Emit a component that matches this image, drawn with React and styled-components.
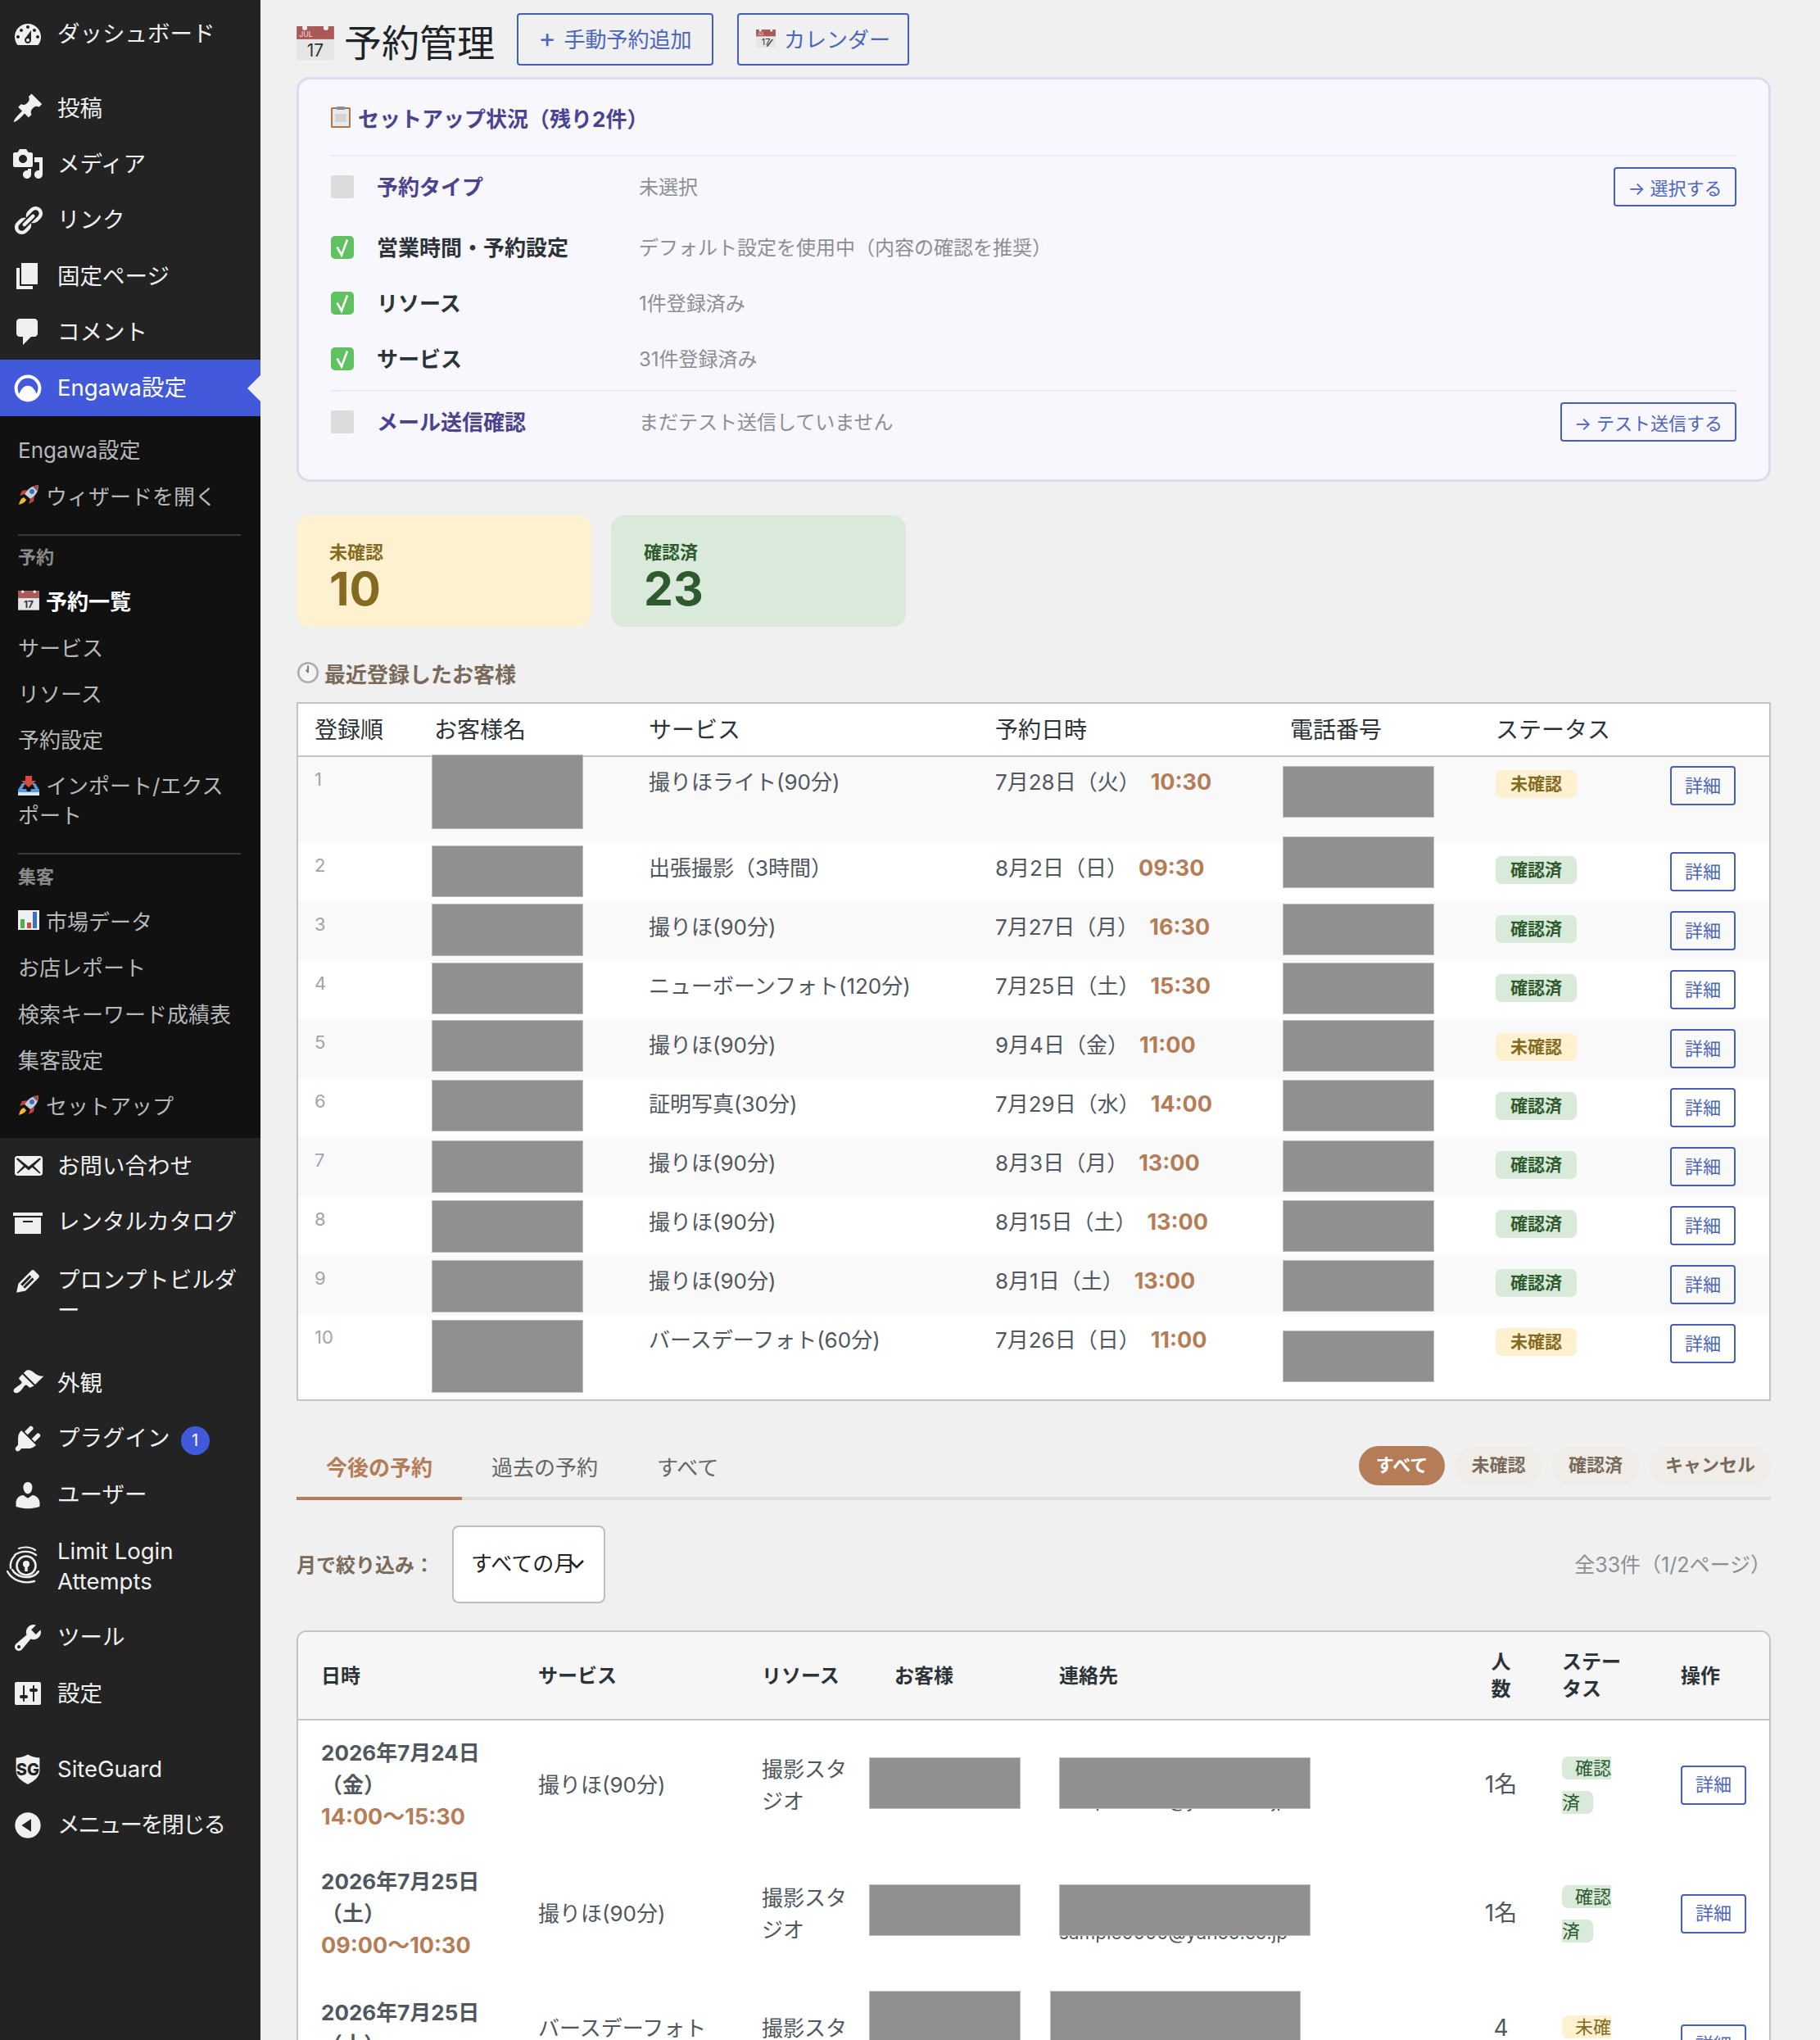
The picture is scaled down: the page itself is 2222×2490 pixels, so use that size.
import React from 'react'
import styled, { createGlobalStyle } from 'styled-components'

const GlobalStyle = createGlobalStyle`
  html, body {
    margin: 0;
    height: 2490px;
    overflow: hidden;
    background: #f0f0f1;
    font-family: Inter, "Noto Sans CJK JP", sans-serif;
  }
  * { box-sizing: border-box; }
`

const Page = styled.div`
  display: flex;
  width: 2222px;
  height: 2490px;
  overflow: hidden;
`

/* ---------- sidebar ---------- */

const Sidebar = styled.nav`
  flex: 0 0 318px;
  background: #232323;
  color: #f0f0f1;
`

const MenuItem = styled.div`
  display: flex;
  align-items: ${p => (p.$top !== undefined ? 'flex-start' : 'center')};
  position: relative;
  height: ${p => p.$h || 68.3}px;
  margin-top: ${p => p.$gap || 0}px;
  padding-left: 14px;
  padding-top: ${p => p.$top || 0}px;
  font-size: 27.5px;
  line-height: 37px;
  background: ${p => (p.$active ? '#4259dc' : 'transparent')};
  color: ${p => (p.$active ? '#fff' : '#f0f0f1')};

  svg {
    flex: 0 0 40px;
    width: 40px;
    height: 40px;
    fill: currentColor;
  }
`

const MenuLabel = styled.span`
  margin-left: 16px;
  white-space: nowrap;
  letter-spacing: ${p => p.$ls || 0}px;
`

const ActiveArrow = styled.i`
  position: absolute;
  right: 0;
  top: 50%;
  margin-top: -16px;
  border: 16px solid transparent;
  border-right-color: #f0f0f1;
  border-left-width: 0;
`

const CountBadge = styled.span`
  display: inline-block;
  width: 35px;
  height: 35px;
  margin-left: 13px;
  border-radius: 18px;
  background: #4259dc;
  color: #fff;
  font-size: 20px;
  line-height: 35px;
  letter-spacing: 0;
  text-align: center;
  vertical-align: 0;
`

const SubMenu = styled.div`
  background: #111;
  height: 881.5px;
  padding: 12px 24px 0 22px;
`

const SubItem = styled.div`
  display: flex;
  align-items: center;
  gap: 8px;
  height: 56.4px;
  font-size: 26px;
  color: ${p => (p.$current ? '#fff' : '#b6b8ba')};
  font-weight: ${p => (p.$current ? 700 : 400)};
  white-space: nowrap;

  svg { flex: 0 0 26px; }
`

const SubItemWrap = styled.div`
  font-size: 26px;
  line-height: 36px;
  color: #b6b8ba;
  padding: 12px 0 8px;

  svg { vertical-align: -3px; margin-right: 8px; }
`

const SubDivider = styled.div`
  height: 2px;
  background: #383838;
  margin: 19px 0 ${p => p.$mb}px;
`

const SubSection = styled.div`
  font-size: 22px;
  font-weight: 700;
  line-height: 24px;
  color: #8a8a8a;
  margin-bottom: 13px;
`

const LimitLoginSvg = styled.svg`
  && {
    height: 50px;
    margin-left: -6px;
    margin-right: 6px;
  }
`

const ShieldText = styled.text`
  font-size: 10px;
  font-weight: 800;
  fill: #232323;
`

/* ---------- main column ---------- */

const Main = styled.main`
  flex: 1;
  padding: 16px 60px 0 44px;
  min-width: 0;
`

const TitleRow = styled.header`
  display: flex;
  align-items: flex-start;
  height: 64px;
`

const PageTitle = styled.h1`
  display: flex;
  align-items: center;
  gap: 12px;
  margin: 13px 27px 0 0;
  font-size: 46px;
  font-weight: 400;
  line-height: 46px;
  color: #1d2327;
`

const OutlineButton = styled.button`
  display: inline-flex;
  align-items: center;
  justify-content: center;
  gap: ${p => p.$gap || 0}px;
  height: ${p => p.$h || 48}px;
  width: ${p => (p.$w ? `${p.$w}px` : 'auto')};
  padding: 0 0 ${p => p.$pb || 0}px;
  margin-right: ${p => p.$mr || 0}px;
  background: transparent;
  border: 2px solid #4560bb;
  border-radius: 4px;
  color: #4c65bd;
  font: inherit;
  font-size: ${p => p.$size || 22}px;
  white-space: nowrap;
`

const PlusMark = styled.span`
  font-size: 32px;
  line-height: 32px;
  margin-right: 10px;
`

const SetupCard = styled.section`
  margin-top: 14px;
  height: 494px;
  padding: 0 39px;
  background: #f8f7fd;
  border: 3px solid #dbdaf0;
  border-radius: 16px;
`

const SetupTitle = styled.h2`
  display: flex;
  align-items: center;
  gap: 9px;
  height: 94px;
  margin: 0;
  font-size: 26px;
  font-weight: 700;
  color: #4a4390;
  border-bottom: 2px solid #ebeaf6;
`

const SetupRow = styled.div`
  display: flex;
  align-items: center;
  height: ${p => p.$h}px;
  margin-bottom: ${p => p.$mb || 0}px;
  border-top: ${p => (p.$line ? '2px solid #ebeaf6' : '0')};
`

const CheckBox = styled.span`
  flex: 0 0 28px;
  height: 28px;
  border-radius: 2px;
  background: #dcdcdc;
`

const SetupLabel = styled.span`
  flex: 0 0 320px;
  margin-left: 28px;
  padding-bottom: 3px;
  font-size: 26px;
  font-weight: 700;
  color: ${p => (p.$todo ? '#4a4390' : '#2c3338')};
`

const SetupValue = styled.span`
  flex: 1;
  padding-bottom: 3px;
  font-size: 24px;
  color: #8c8f94;
`

const StatRow = styled.div`
  display: flex;
  gap: 24px;
  margin-top: 41px;
`

const StatCard = styled.div`
  width: 360px;
  height: 136px;
  padding: 30px 40px 0;
  border-radius: 16px;
  background: ${p => p.$bg};
  color: ${p => p.$fg};
`

const StatLabel = styled.div`
  font-size: 22px;
  font-weight: 700;
  line-height: 30px;
`

const StatValue = styled.div`
  font-size: 57px;
  font-weight: 700;
  line-height: 60px;
`

const SectionHeading = styled.h3`
  display: flex;
  align-items: center;
  gap: 6px;
  height: 40px;
  margin: 36px 0 16px;
  font-size: 26px;
  font-weight: 700;
  color: #7a6a5a;
`

const TableBox = styled.div`
  margin-top: ${p => p.$mt || 0}px;
  border: 2px solid #c3c4c7;
  background: #fff;
  border-radius: ${p => p.$r || '0'};
  overflow: ${p => (p.$clip ? 'hidden' : 'visible')};
`

const DataTable = styled.table`
  width: 1796px;
  table-layout: fixed;
  border-collapse: separate;
  border-spacing: 0;
`

const RecentHead = styled.th`
  height: 65px;
  padding: 0 0 3px 20px;
  border-bottom: 2px solid #c3c4c7;
  font-size: 28px;
  font-weight: 400;
  text-align: left;
  color: #2c3338;
`

const RecentRow = styled.tr`
  background: ${p => (p.$odd ? '#f9f9f9' : '#fff')};
`

const RecentCell = styled.td`
  position: relative;
  height: ${p => p.$h}px;
  padding: 11px 0 0 20px;
  vertical-align: top;
  font-size: 26px;
  line-height: 40px;
  color: #50575e;
  white-space: nowrap;
`

const RowNumber = styled.span`
  display: block;
  font-size: 22px;
  line-height: 32px;
  color: #a0a5aa;
`

const TimeText = styled.b`
  margin-left: 13px;
  font-size: 27px;
  color: #b57d57;
`

const StatusBadge = styled.span`
  display: inline-block;
  margin-top: 3px;
  padding: 0 18px;
  height: 34px;
  border-radius: 7px;
  font-size: 21px;
  font-weight: 700;
  line-height: 34px;
  background: ${p => (p.$pending ? '#fdf1d0' : '#d9eadb')};
  color: ${p => (p.$pending ? '#856a22' : '#2e5a2e')};
`

/* grey blocks that hide customer data in the source picture */
const Redact = styled.div`
  position: absolute;
  z-index: 1;
  left: ${p => p.$x}px;
  top: ${p => p.$y}px;
  width: ${p => p.$w}px;
  height: ${p => p.$h}px;
  background: #909090;
  border: 1px solid #bdbdbd;
`

const TabBar = styled.div`
  display: flex;
  align-items: flex-end;
  justify-content: space-between;
  height: 121px;
  border-bottom: 4px solid #dfdfdf;
`

const Tabs = styled.div`
  display: flex;
`

const Tab = styled.div`
  height: 71px;
  margin-bottom: -4px;
  padding: 0 36px;
  font-size: 26px;
  line-height: 64px;
  font-weight: ${p => (p.$active ? 700 : 400)};
  color: ${p => (p.$active ? '#b57d57' : '#666')};
  border-bottom: 4px solid ${p => (p.$active ? '#b57d57' : 'transparent')};
`

const Pills = styled.div`
  display: flex;
  gap: 13px;
  padding-bottom: 14px;
`

const Pill = styled.span`
  width: ${p => p.$w}px;
  height: 48px;
  border-radius: 24px;
  font-size: 22px;
  font-weight: 700;
  line-height: 46px;
  text-align: center;
  background: ${p => (p.$active ? '#b57d57' : '#f0ede8')};
  color: ${p => (p.$active ? '#fff' : '#7a6a5a')};
`

const FilterRow = styled.div`
  display: flex;
  align-items: center;
  height: 95px;
  margin-top: 31px;
`

const FilterLabel = styled.label`
  width: 190px;
  margin-bottom: 2px;
  font-size: 24px;
  font-weight: 700;
  color: #7a6a5a;
`

const MonthSelect = styled.div`
  position: relative;
  width: 187px;
  height: 95px;
  padding-left: 21px;
  background: #fff;
  border: 2px solid #c4bdb0;
  border-radius: 8px;
  font-size: 26px;
  line-height: 89px;
  color: #222;

  svg {
    position: absolute;
    left: 140px;
    top: 38px;
  }
`

const PageCount = styled.span`
  margin-left: auto;
  margin-bottom: 3px;
  font-size: 25px;
  color: #8c8f94;
`

const BookingHead = styled.th`
  height: 108px;
  padding: ${p => p.$pad || '0 0 0 28px'};
  background: #f6f6f7;
  border-bottom: 2px solid #c3c4c7;
  font-size: 24px;
  font-weight: 700;
  line-height: 33px;
  text-align: ${p => (p.$center ? 'center' : 'left')};
  color: #2c3338;
`

const BookingCell = styled.td`
  position: relative;
  height: ${p => p.$h}px;
  padding: 0 ${p => p.$right || 0}px 0 28px;
  vertical-align: middle;
  font-size: 26px;
  line-height: 39px;
  color: #50575e;
`

const ContactCell = styled(BookingCell)`
  vertical-align: top;
`

const CountCell = styled(BookingCell)`
  padding: 0 6px 0 0;
  font-size: 28px;
  text-align: center;
`

const DateText = styled.div`
  font-weight: 700;
`

const RangeText = styled.div`
  font-weight: 700;
  font-size: 27px;
  color: #b57d57;
`

const MailText = styled.div`
  font-size: 22.5px;
  line-height: 30px;
  padding-top: ${p => p.$top}px;
  white-space: nowrap;
`

const WrapBadge = styled.span`
  padding: 1px 16px;
  border-radius: 7px;
  font-size: 22px;
  line-height: 41px;
  box-decoration-break: slice;
  -webkit-box-decoration-break: slice;
  background: ${p => (p.$pending ? '#fdf1d0' : '#d9eadb')};
  color: ${p => (p.$pending ? '#856a22' : '#2e5a2e')};
`

/* ---------- icons ---------- */

const I = {
  dashboard: 'M3.76 16h12.48c1.1-1.37 1.76-3.11 1.76-5 0-4.42-3.58-8-8-8s-8 3.58-8 8c0 1.89.66 3.63 1.76 5zM10 4c.55 0 1 .45 1 1s-.45 1-1 1-1-.45-1-1 .45-1 1-1zM6 6c.55 0 1 .45 1 1s-.45 1-1 1-1-.45-1-1 .45-1 1-1zm8 0c.55 0 1 .45 1 1s-.45 1-1 1-1-.45-1-1 .45-1 1-1zm-5.37 5.55L12 7v6c0 1.1-.9 2-2 2s-2-.9-2-2c0-.57.24-1.08.63-1.45zM4 10c.55 0 1 .45 1 1s-.45 1-1 1-1-.45-1-1 .45-1 1-1zm12 0c.55 0 1 .45 1 1s-.45 1-1 1-1-.45-1-1 .45-1 1-1zm-5 3c0-.55-.45-1-1-1s-1 .45-1 1 .45 1 1 1 1-.45 1-1z',
  post: 'M10.44 3.02l1.82-1.82 6.36 6.35-1.83 1.82c-1.05-.68-2.48-.57-3.41.36l-.75.75c-.92.93-1.04 2.35-.35 3.41l-1.83 1.82-2.41-2.41-2.8 2.79c-.42.42-3.38 2.71-3.8 2.29s1.86-3.39 2.28-3.81l2.79-2.79L4.1 9.36l1.83-1.82c1.05.69 2.48.57 3.4-.36l.75-.75c.93-.92 1.05-2.35.36-3.41z',
  media: 'M13 11V4c0-.55-.45-1-1-1h-1.67L9 1H5L3.67 3H2c-.55 0-1 .45-1 1v7c0 .55.45 1 1 1h10c.55 0 1-.45 1-1zM7 4.5c1.38 0 2.5 1.12 2.5 2.5S8.38 9.5 7 9.5 4.5 8.38 4.5 7 5.62 4.5 7 4.5zM14 6h5v10.5c0 1.38-1.12 2.5-2.5 2.5S14 17.88 14 16.5s1.12-2.5 2.5-2.5c.17 0 .34.02.5.05V9h-3V6zm-4 8.05V13h2v3.5c0 1.38-1.12 2.5-2.5 2.5S7 17.88 7 16.5 8.12 14 9.5 14c.17 0 .34.02.5.05z',
  links: 'M17.74 2.76c1.68 1.69 1.68 4.41 0 6.1l-1.53 1.52c-1.12 1.12-2.7 1.47-4.14 1.09l2.62-2.61.76-.77.76-.76c.84-.84.84-2.2 0-3.04-.84-.85-2.2-.85-3.04 0l-.77.76-3.38 3.38c-.37-1.44-.02-3.02 1.1-4.14l1.52-1.53c1.69-1.68 4.42-1.68 6.1 0zM8.59 13.43l5.34-5.34c.42-.42.42-1.1 0-1.52-.44-.43-1.13-.39-1.53 0l-5.33 5.34c-.42.42-.42 1.1 0 1.52.44.43 1.13.39 1.52 0zm-.76 2.29l4.14-4.15c.38 1.44.03 3.02-1.09 4.14l-1.52 1.53c-1.69 1.68-4.41 1.68-6.1 0-1.68-1.68-1.68-4.42 0-6.1l1.53-1.52c1.12-1.12 2.7-1.47 4.14-1.1l-4.14 4.15c-.85.84-.85 2.2 0 3.05.84.84 2.2.84 3.04 0z',
  page: 'M6 15V2h10v13H6zm-1 1h8v2H3V5h2v11z',
  comment: 'M5 2h9c1.1 0 2 .9 2 2v7c0 1.1-.9 2-2 2h-2l-5 5v-5H5c-1.1 0-2-.9-2-2V4c0-1.1.9-2 2-2z',
  mail: 'M19 14.5v-9c0-.83-.67-1.5-1.5-1.5H3.49c-.83 0-1.5.67-1.5 1.5v9c0 .83.67 1.5 1.5 1.5H17.5c.83 0 1.5-.67 1.5-1.5zm-1.31-9.11c.33.33.15.67-.03.84L13.6 9.95l3.9 4.06c.12.14.2.36.06.51-.13.16-.43.15-.56.05l-4.37-3.73-2.14 1.95-2.13-1.95-4.37 3.73c-.13.1-.43.11-.56-.05-.14-.15-.06-.37.06-.51l3.9-4.06-4.06-3.72c-.18-.17-.36-.51-.03-.84s.67-.17.95.07l6.24 5.04 6.25-5.04c.28-.24.62-.4.95-.07z',
  archive: 'M19 4v2H1V4h18zM2 7h16v10H2V7zm11 3V9H7v1h6z',
  edit: 'M13.89 3.39l2.71 2.72c.46.46.42 1.24.03 1.64l-8.01 8.02-5.56 1.16 1.16-5.58s7.6-7.63 7.99-8.03c.39-.39 1.22-.39 1.68.07zm-2.73 2.79l-5.59 5.61 1.11 1.11 5.54-5.65zm-2.97 8.23l5.58-5.6-1.07-1.08-5.59 5.6z',
  appearance: 'M14.48 11.06L7.41 3.99l1.5-1.5c.5-.56 2.3-.47 3.51.32 1.21.8 1.43 1.28 2.91 2.1 1.18.64 2.45 1.26 4.45.85zm-.71.71L6.7 4.7 4.93 6.47c-.39.39-.39 1.02 0 1.41l1.06 1.06c.39.39.39 1.03 0 1.42-.6.6-1.43 1.11-2.21 1.69-.35.26-.7.53-1.01.84C1.43 13.23.91 15 1.71 15.8c.79.8 2.57.27 3.93-1.08.31-.31.58-.66.85-1.02.57-.78 1.08-1.61 1.69-2.21.39-.39 1.02-.39 1.41 0l1.06 1.06c.39.39 1.02.39 1.41 0z',
  plugin: 'M13.11 4.36L9.87 7.6 8 5.73l3.24-3.24c.35-.34 1.05-.2 1.56.32.52.51.66 1.21.31 1.55zm-8 1.77l.91-1.12 9.01 9.01-1.19.84c-.71.71-2.63 1.16-3.82 1.16H6.14L4.9 17.26c-.59.59-1.54.59-2.12 0-.59-.58-.59-1.53 0-2.12l1.24-1.24v-3.88c0-1.13.4-3.19 1.09-3.89zm7.26 3.97l3.24-3.24c.34-.35 1.04-.21 1.55.31.52.51.66 1.21.31 1.55l-3.24 3.25z',
  users: 'M10 9.25c-2.27 0-2.73-3.44-2.73-3.44C7 4.02 7.82 2 9.97 2c2.16 0 2.98 2.02 2.71 3.81 0 0-.41 3.44-2.68 3.44zm0 2.57L12.72 10c2.39 0 4.52 2.33 4.52 4.53v2.49s-3.65 1.13-7.24 1.13c-3.65 0-7.24-1.13-7.24-1.13v-2.49c0-2.25 1.94-4.48 4.47-4.48z',
  tools: 'M16.68 9.77c-1.34 1.34-3.3 1.67-4.95.99l-5.41 6.52c-.99.99-2.59.99-3.58 0s-.99-2.59 0-3.57l6.52-5.42c-.68-1.65-.35-3.61.99-4.95 1.28-1.28 3.12-1.62 4.72-1.06l-2.89 2.89 2.82 2.82 2.86-2.87c.53 1.58.18 3.39-1.08 4.65zM3.81 16.21c.4.39 1.04.39 1.43 0 .4-.4.4-1.04 0-1.43-.39-.4-1.03-.4-1.43 0-.39.39-.39 1.03 0 1.43z',
  settings: 'M18 16V4c0-.55-.45-1-1-1H3c-.55 0-1 .45-1 1v12c0 .55.45 1 1 1h14c.55 0 1-.45 1-1zM8 11h1c.55 0 1 .45 1 1s-.45 1-1 1H8v1.5c0 .28-.22.5-.5.5s-.5-.22-.5-.5V13H6c-.55 0-1-.45-1-1s.45-1 1-1h1V5.5c0-.28.22-.5.5-.5s.5.22.5.5V11zm5-2h-1c-.55 0-1-.45-1-1s.45-1 1-1h1V5.5c0-.28.22-.5.5-.5s.5.22.5.5V7h1c.55 0 1 .45 1 1s-.45 1-1 1h-1v5.5c0 .28-.22.5-.5.5s-.5-.22-.5-.5V9z',
  collapse: 'M10 2.16c4.33 0 7.84 3.51 7.84 7.84s-3.51 7.84-7.84 7.84S2.16 14.33 2.16 10 5.71 2.16 10 2.16zm2 11.72V6.12L6.18 9.97z',
}

const Dash = ({ d }) => (
  <svg viewBox="0 0 20 20"><path d={d} /></svg>
)

const EngawaIcon = () => (
  <svg viewBox="0 0 20 20">
    <circle cx="10" cy="10" r="7.2" fill="none" stroke="currentColor" strokeWidth="2" />
    <path d="M4.4 14.6C5.4 10.6 7.6 8.4 10 8.4s4.6 2.2 5.6 6.2C14.2 16.2 12.2 17 10 17s-4.2-.8-5.6-2.4z" />
  </svg>
)

const LimitLoginIcon = () => (
  <LimitLoginSvg viewBox="0 0 40 50">
    <g fill="none" stroke="currentColor" strokeLinecap="round">
      <path strokeWidth="2.2" d="M15 3c6-2 14-2 20 2" />
      <path strokeWidth="2.4" d="M10 11c7-5 18-6 26 0" />
      <path strokeWidth="2.4" d="M5 27c-1-7 1-11 5-15" />
      <circle strokeWidth="2.6" cx="24" cy="24" r="11.5" />
      <path strokeWidth="2.4" d="M1 31c6 11 20 16 33 12" />
      <path strokeWidth="2.4" d="M7 29c5 8 15 11 24 8 3-1 6-3 8-6" />
    </g>
    <circle cx="24" cy="22" r="4" />
    <rect x="22.2" y="23" width="3.6" height="8" />
  </LimitLoginSvg>
)

const SiteGuardIcon = () => (
  <svg viewBox="0 0 20 20">
    <path d="M10 .8c2.2 1.4 4.8 2 7.2 2v8c0 3.6-3.2 6.2-7.2 8.2-4-2-7.2-4.6-7.2-8.2v-8c2.4 0 5-.6 7.2-2z" />
    <ShieldText x="10" y="13.5" textAnchor="middle">SG</ShieldText>
  </svg>
)

const CalendarEmoji = ({ size = 26, month, strike }) => (
  <svg width={size} height={size * 0.95} viewBox="0 0 46 44">
    <rect y="2" width="46" height="42" fill="#e6e6e6" />
    <rect y="2" width="46" height="16" fill="#a85a58" />
    <circle cx="10" cy="4" r="3" fill="#f3f3f3" />
    <circle cx="36" cy="4" r="3" fill="#f3f3f3" />
    {month && <text x="3" y="15" fontSize="9" fill="#f4dede" fontFamily="Inter">JUL</text>}
    <text x="23" y="39" fontSize="21" fill="#333" textAnchor="middle" fontFamily="Inter">17</text>
    {strike && <path d="M24 42L38 24l2 2-12 16z" fill="#4a4a4a" />}
  </svg>
)

const RocketEmoji = () => (
  <svg width="26" height="26" viewBox="0 0 26 26">
    <path d="M8 12C12 5 18 2 25 1c0 7-3 13-10 17l-7-6z" fill="#c3cfdc" />
    <circle cx="17" cy="9" r="3" fill="#3f6fb5" />
    <path d="M25 1c-3 .3-5 1-7 2l5 5c1-2 2-4 2-7z" fill="#a34a4a" />
    <path d="M8 12l-6 2 3-6 6-1zM15 18l-2 6 6-3 1-6z" fill="#c8443c" />
    <path d="M7 16c-3 1-5 4-6 9 4-1 8-3 9-6z" fill="#f5b731" />
  </svg>
)

const InboxEmoji = () => (
  <svg width="26" height="26" viewBox="0 0 26 26">
    <path d="M9 1h8v6h5l-9 8-9-8h5z" fill="#d84a3f" />
    <path d="M5 10L0 18v7h26v-7l-5-8-4 0 4 7h-5l-1 3h-4l-1-3H5l4-7z" fill="#5b98d6" />
    <path d="M0 21h26v4H0z" fill="#d7e4f2" />
  </svg>
)

const ChartEmoji = () => (
  <svg width="26" height="26" viewBox="0 0 26 26">
    <rect y="1" width="26" height="24" fill="#eef1f4" />
    <rect x="3" y="12" width="5" height="11" fill="#4caf50" />
    <rect x="11" y="16" width="5" height="7" fill="#d84a3f" />
    <rect x="18" y="3" width="5" height="20" fill="#3f6fb5" />
  </svg>
)

const ClipboardEmoji = () => (
  <svg width="24" height="26" viewBox="0 0 24 26">
    <rect y="1" width="24" height="25" rx="1.5" fill="#a9794e" />
    <rect x="2" y="3" width="20" height="21" fill="#e9e9e9" />
    <rect x="7" y="0" width="10" height="4" rx="1" fill="#8d8d8d" />
    <rect x="5" y="9" width="14" height="10" fill="#d4d4d4" />
  </svg>
)

const ClockEmoji = () => (
  <svg width="28" height="28" viewBox="0 0 28 28">
    <circle cx="14" cy="14" r="13" fill="#a9adb0" />
    <circle cx="14" cy="14" r="10.5" fill="#f4f4f2" />
    <path d="M14 5.5v8.5" stroke="#555" strokeWidth="1.5" />
    <path d="M14 14l-2.5-3.5" stroke="#777" strokeWidth="1.5" />
  </svg>
)

const CheckEmoji = () => (
  <svg width="28" height="28" viewBox="0 0 28 28">
    <rect width="28" height="28" rx="5" fill="#5fc15f" />
    <path d="M7.5 13.5l5.5 10L20 4.5" fill="none" stroke="#fff" strokeWidth="2.6" />
  </svg>
)

const Chevron = () => (
  <svg width="20" height="14" viewBox="0 0 20 14">
    <path d="M2 3l8 8 8-8" fill="none" stroke="#1d2327" strokeWidth="2.6" />
  </svg>
)

/* ---------- data ---------- */

const recent = [
  { no: 1, h: 105, service: '撮りほライト(90分)', date: '7月28日（火）', time: '10:30', pending: true, name: [-3, 91], tel: 11 },
  { no: 2, h: 72, service: '出張撮影（3時間）', date: '8月2日（日）', time: '09:30', name: [3, 63], tel: -8 },
  { no: 3, h: 72, service: '撮りほ(90分)', date: '7月27日（月）', time: '16:30', name: [2, 64], tel: 2 },
  { no: 4, h: 72, service: 'ニューボーンフォト(120分)', date: '7月25日（土）', time: '15:30', name: [2, 63], tel: 2 },
  { no: 5, h: 72, service: '撮りほ(90分)', date: '9月4日（金）', time: '11:00', pending: true, name: [0, 63], tel: 0 },
  { no: 6, h: 72, service: '証明写真(30分)', date: '7月29日（水）', time: '14:00', name: [1, 63], tel: 1 },
  { no: 7, h: 72, service: '撮りほ(90分)', date: '8月3日（月）', time: '13:00', name: [3, 64], tel: 3 },
  { no: 8, h: 72, service: '撮りほ(90分)', date: '8月15日（土）', time: '13:00', name: [4, 64], tel: 4 },
  { no: 9, h: 72, service: '撮りほ(90分)', date: '8月1日（土）', time: '13:00', name: [5, 64], tel: 5 },
  { no: 10, h: 103, service: 'バースデーフォト(60分)', date: '7月26日（日）', time: '11:00', pending: true, name: [6, 89], tel: 19 },
]

const bookings = [
  { h: 157, date: '2026年7月24日（金）', range: '14:00〜15:30', service: '撮りほ(90分)', count: <>1名</>, y: 45, mailX: 28, mailW: 307, mailH: 63, mailTop: 83 },
  { h: 157, date: '2026年7月25日（土）', range: '09:00〜10:30', service: '撮りほ(90分)', count: <>1名</>, y: 43, mailX: 28, mailW: 307, mailH: 63, mailTop: 87 },
  { h: 162, date: '2026年7月25日（土）', range: '11:00〜12:00', service: 'バースデーフォト(60分)', count: <>4<br />名</>, y: 16, mailX: 17, mailW: 306, mailH: 120, mailTop: 83, pending: true },
]

const recentCols = [146, 262, 423, 360, 251, 213, 141]
const bookingCols = [265, 273, 162, 201, 527, 87, 145, 136]

const ColGroup = ({ widths }) => (
  <colgroup>
    {widths.map((w, i) => <col key={i} width={w} />)}
  </colgroup>
)

export default function App() {
  return (
    <Page>
      <GlobalStyle />
      <Sidebar>
        <MenuItem $h={74} $top={23}>
          <Dash d={I.dashboard} /><MenuLabel>ダッシュボード</MenuLabel>
        </MenuItem>
        <MenuItem $gap={24}><Dash d={I.post} /><MenuLabel>投稿</MenuLabel></MenuItem>
        <MenuItem><Dash d={I.media} /><MenuLabel>メディア</MenuLabel></MenuItem>
        <MenuItem><Dash d={I.links} /><MenuLabel>リンク</MenuLabel></MenuItem>
        <MenuItem><Dash d={I.page} /><MenuLabel>固定ページ</MenuLabel></MenuItem>
        <MenuItem><Dash d={I.comment} /><MenuLabel>コメント</MenuLabel></MenuItem>
        <MenuItem $active><EngawaIcon /><MenuLabel>Engawa設定</MenuLabel><ActiveArrow /></MenuItem>

        <SubMenu>
          <SubItem>Engawa設定</SubItem>
          <SubItem><RocketEmoji />ウィザードを開く</SubItem>
          <SubDivider $mb={14} />
          <SubSection>予約</SubSection>
          <SubItem $current><CalendarEmoji />予約一覧</SubItem>
          <SubItem>サービス</SubItem>
          <SubItem>リソース</SubItem>
          <SubItem>予約設定</SubItem>
          <SubItemWrap><InboxEmoji />インポート/エクス<br />ポート</SubItemWrap>
          <SubDivider $mb={15} />
          <SubSection>集客</SubSection>
          <SubItem><ChartEmoji />市場データ</SubItem>
          <SubItem>お店レポート</SubItem>
          <SubItem>検索キーワード成績表</SubItem>
          <SubItem>集客設定</SubItem>
          <SubItem><RocketEmoji />セットアップ</SubItem>
        </SubMenu>

        <MenuItem><Dash d={I.mail} /><MenuLabel>お問い合わせ</MenuLabel></MenuItem>
        <MenuItem><Dash d={I.archive} /><MenuLabel>レンタルカタログ</MenuLabel></MenuItem>
        <MenuItem $h={104} $top={18}>
          <Dash d={I.edit} /><MenuLabel>プロンプトビルダ<br />ー</MenuLabel>
        </MenuItem>
        <MenuItem $gap={24}><Dash d={I.appearance} /><MenuLabel>外観</MenuLabel></MenuItem>
        <MenuItem><Dash d={I.plugin} /><MenuLabel>プラグイン<CountBadge>1</CountBadge></MenuLabel></MenuItem>
        <MenuItem><Dash d={I.users} /><MenuLabel>ユーザー</MenuLabel></MenuItem>
        <MenuItem $h={106}><LimitLoginIcon /><MenuLabel>Limit Login<br />Attempts</MenuLabel></MenuItem>
        <MenuItem><Dash d={I.tools} /><MenuLabel>ツール</MenuLabel></MenuItem>
        <MenuItem><Dash d={I.settings} /><MenuLabel>設定</MenuLabel></MenuItem>
        <MenuItem $gap={24}><SiteGuardIcon /><MenuLabel>SiteGuard</MenuLabel></MenuItem>
        <MenuItem><Dash d={I.collapse} /><MenuLabel $ls={-2}>メニューを閉じる</MenuLabel></MenuItem>
      </Sidebar>

      <Main>
        <TitleRow>
          <PageTitle><CalendarEmoji size={46} month />予約管理</PageTitle>
          <OutlineButton $w={240} $h={64} $size={26} $mr={29} $pb={3}><PlusMark>+</PlusMark>手動予約追加</OutlineButton>
          <OutlineButton $w={210} $h={64} $size={26} $gap={10} $pb={3}><CalendarEmoji size={24} month strike />カレンダー</OutlineButton>
        </TitleRow>

        <SetupCard>
          <SetupTitle><ClipboardEmoji />セットアップ状況（残り2件）</SetupTitle>
          <SetupRow $h={74} $mb={3}>
            <CheckBox /><SetupLabel $todo>予約タイプ</SetupLabel><SetupValue>未選択</SetupValue>
            <OutlineButton $w={150} $gap={8}>→ 選択する</OutlineButton>
          </SetupRow>
          <SetupRow $h={68}>
            <CheckEmoji /><SetupLabel>営業時間・予約設定</SetupLabel>
            <SetupValue>デフォルト設定を使用中（内容の確認を推奨）</SetupValue>
          </SetupRow>
          <SetupRow $h={68}>
            <CheckEmoji /><SetupLabel>リソース</SetupLabel><SetupValue>1件登録済み</SetupValue>
          </SetupRow>
          <SetupRow $h={68} $mb={4}>
            <CheckEmoji /><SetupLabel>サービス</SetupLabel><SetupValue>31件登録済み</SetupValue>
          </SetupRow>
          <SetupRow $h={76} $line>
            <CheckBox /><SetupLabel $todo>メール送信確認</SetupLabel><SetupValue>まだテスト送信していません</SetupValue>
            <OutlineButton $w={215}>→ テスト送信する</OutlineButton>
          </SetupRow>
        </SetupCard>

        <StatRow>
          <StatCard $bg="#fdf1d0" $fg="#856a22">
            <StatLabel>未確認</StatLabel>
            <StatValue>10</StatValue>
          </StatCard>
          <StatCard $bg="#d9eadb" $fg="#2e5a2e">
            <StatLabel>確認済</StatLabel>
            <StatValue>23</StatValue>
          </StatCard>
        </StatRow>

        <SectionHeading><ClockEmoji />最近登録したお客様</SectionHeading>

        <TableBox>
          <DataTable>
            <ColGroup widths={recentCols} />
            <thead>
              <tr>
                <RecentHead>登録順</RecentHead>
                <RecentHead>お客様名</RecentHead>
                <RecentHead>サービス</RecentHead>
                <RecentHead>予約日時</RecentHead>
                <RecentHead>電話番号</RecentHead>
                <RecentHead>ステータス</RecentHead>
                <RecentHead />
              </tr>
            </thead>
            <tbody>
              {recent.map(r => (
                <RecentRow key={r.no} $odd={r.no % 2 === 1}>
                  <RecentCell $h={r.h}><RowNumber>{r.no}</RowNumber></RecentCell>
                  <RecentCell $h={r.h}><Redact $x={17} $y={r.name[0]} $w={185} $h={r.name[1]} /></RecentCell>
                  <RecentCell $h={r.h}>{r.service}</RecentCell>
                  <RecentCell $h={r.h}>{r.date}<TimeText>{r.time}</TimeText></RecentCell>
                  <RecentCell $h={r.h}><Redact $x={11} $y={r.tel} $w={185} $h={63} /></RecentCell>
                  <RecentCell $h={r.h}>
                    <StatusBadge $pending={r.pending}>{r.pending ? '未確認' : '確認済'}</StatusBadge>
                  </RecentCell>
                  <RecentCell $h={r.h}><OutlineButton $w={80}>詳細</OutlineButton></RecentCell>
                </RecentRow>
              ))}
            </tbody>
          </DataTable>
        </TableBox>

        <TabBar>
          <Tabs>
            <Tab $active>今後の予約</Tab>
            <Tab>過去の予約</Tab>
            <Tab>すべて</Tab>
          </Tabs>
          <Pills>
            <Pill $active $w={105}>すべて</Pill>
            <Pill $w={105}>未確認</Pill>
            <Pill $w={106}>確認済</Pill>
            <Pill $w={148}>キャンセル</Pill>
          </Pills>
        </TabBar>

        <FilterRow>
          <FilterLabel>月で絞り込み：</FilterLabel>
          <MonthSelect>すべての月<Chevron /></MonthSelect>
          <PageCount>全33件（1/2ページ）</PageCount>
        </FilterRow>

        <TableBox $r="12px 12px 0 0" $clip $mt={33}>
          <DataTable>
            <ColGroup widths={bookingCols} />
            <thead>
              <tr>
                <BookingHead>日時</BookingHead>
                <BookingHead>サービス</BookingHead>
                <BookingHead>リソース</BookingHead>
                <BookingHead>お客様</BookingHead>
                <BookingHead>連絡先</BookingHead>
                <BookingHead $center $pad="0 31px 0 25px">人数</BookingHead>
                <BookingHead $pad="0 40px 0 28px">ステータス</BookingHead>
                <BookingHead>操作</BookingHead>
              </tr>
            </thead>
            <tbody>
              {bookings.map((b, i) => (
                <tr key={i}>
                  <BookingCell $h={b.h}>
                    <DateText>{b.date}</DateText>
                    <RangeText>{b.range}</RangeText>
                  </BookingCell>
                  <BookingCell $h={b.h}>{b.service}</BookingCell>
                  <BookingCell $h={b.h} $right={28}>撮影スタジオ</BookingCell>
                  <BookingCell $h={b.h}><Redact $x={-3} $y={b.y} $w={185} $h={b.mailH} /></BookingCell>
                  <ContactCell $h={b.h}>
                    <Redact $x={b.mailX} $y={b.y} $w={b.mailW} $h={b.mailH} />
                    <MailText $top={b.mailTop}>sample0000@yahoo.co.jp</MailText>
                  </ContactCell>
                  <CountCell $h={b.h}>{b.count}</CountCell>
                  <BookingCell $h={b.h} $right={52}>
                    <WrapBadge $pending={b.pending}>{b.pending ? '未確認' : '確認済'}</WrapBadge>
                  </BookingCell>
                  <BookingCell $h={b.h}><OutlineButton $w={80}>詳細</OutlineButton></BookingCell>
                </tr>
              ))}
            </tbody>
          </DataTable>
        </TableBox>
      </Main>
    </Page>
  )
}
